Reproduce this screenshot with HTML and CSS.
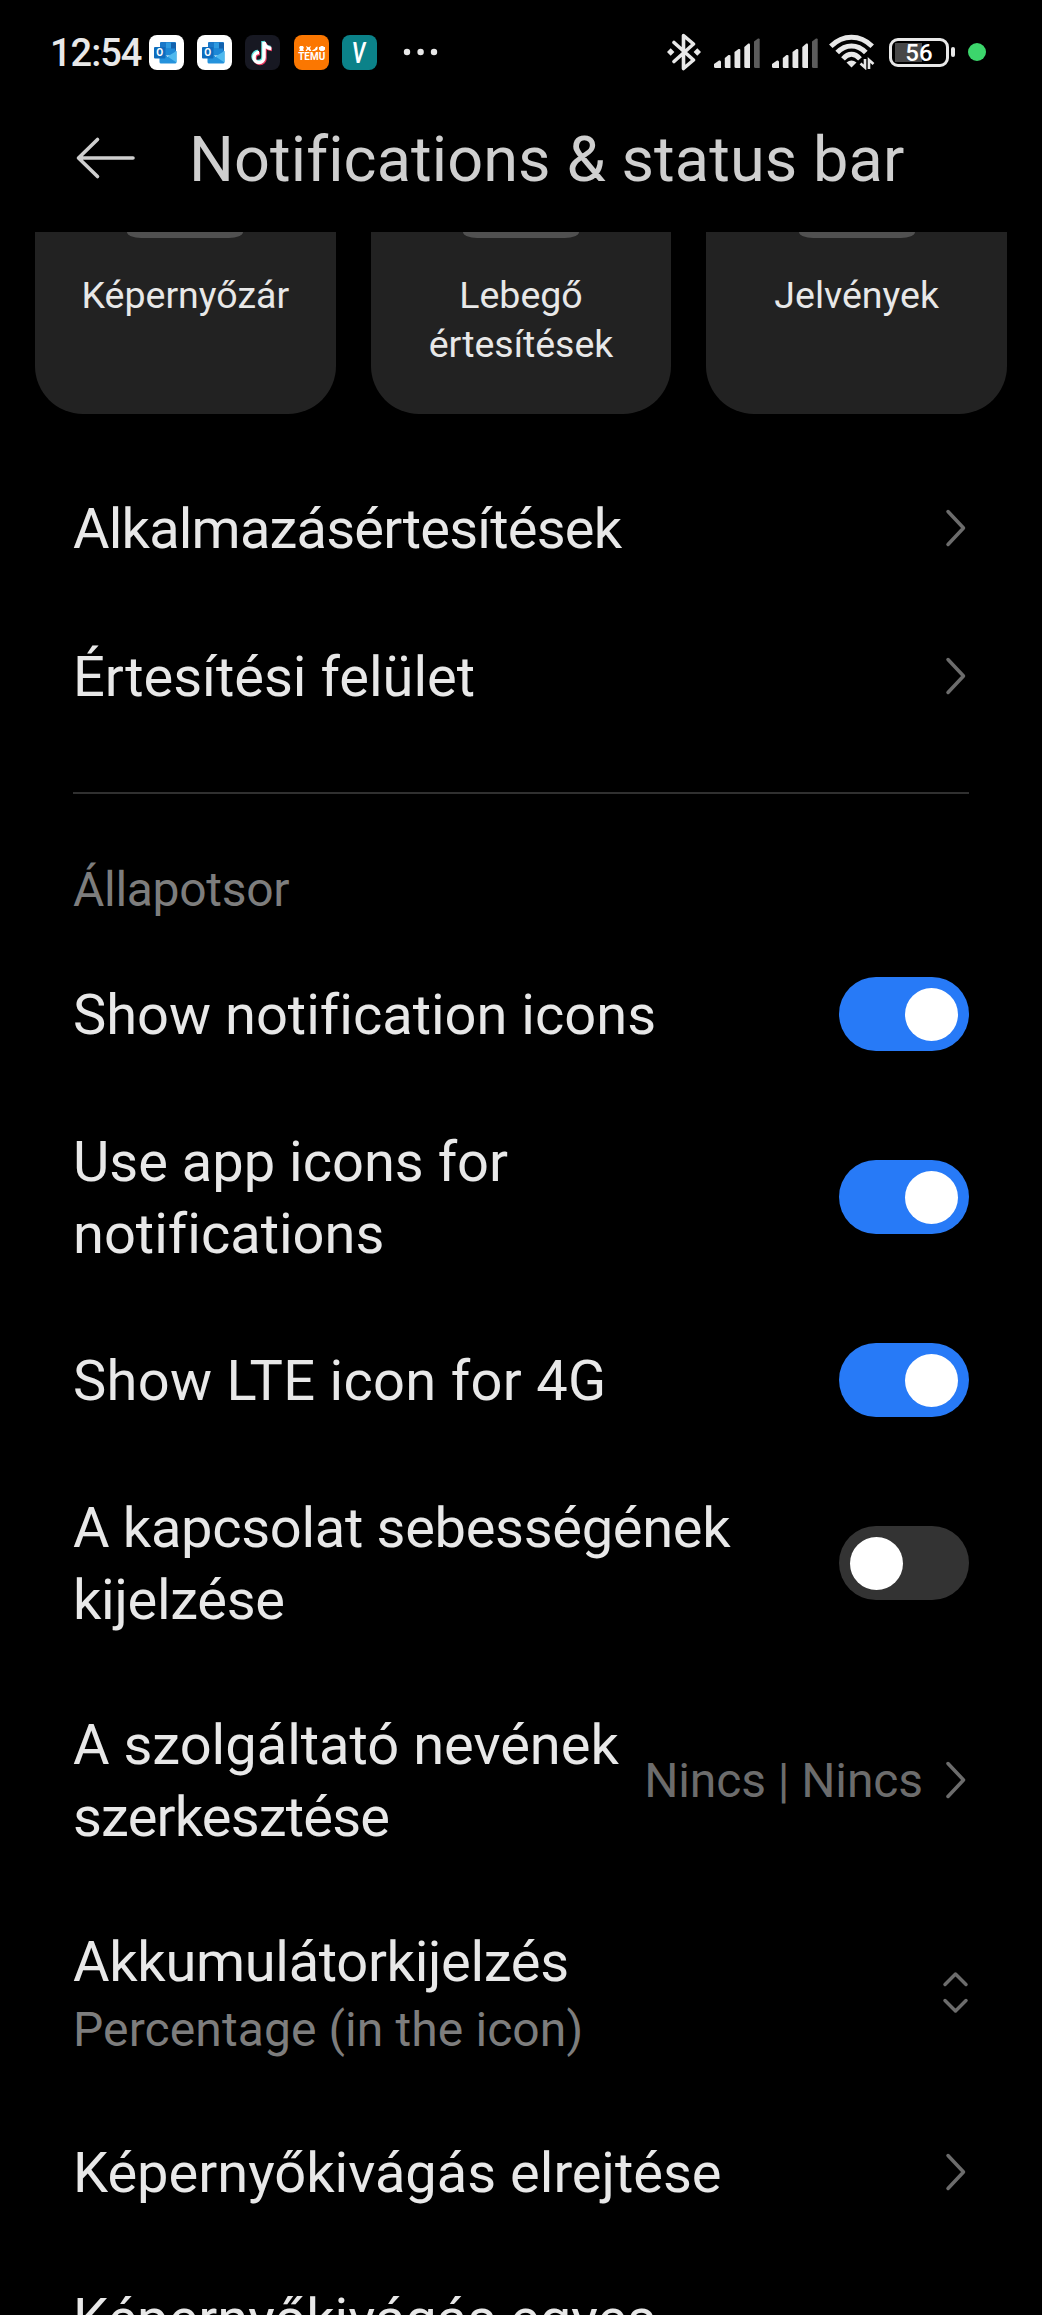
FILE: index.html
```html
<!DOCTYPE html>
<html lang="hu">
<head>
    <meta charset="UTF-8">
    <meta name="viewport" content="width=device-width, initial-scale=1.0">
    <title>Notifications &amp; status bar</title>
    <link rel="stylesheet" href="styles.css">
</head>
<body>

    <!-- Status bar -->
    <div class="status-bar">
        <div class="clock">12:54</div>
        <div class="app-icons">
            <svg width="35" height="35" viewBox="0 0 35 35">
                <rect width="35" height="35" rx="8" fill="#fff"/>
                <rect x="11" y="7" width="16" height="10" rx="1" fill="#1a78c8"/>
                <rect x="17" y="7.500" width="5" height="6" fill="#2f9be0"/>
                <rect x="22" y="8" width="5" height="7" fill="#1261ad"/>
                <rect x="11" y="13.500" width="15" height="7" fill="#1d88d6"/>
                <path d="M10.500 15 L19 22 L27.500 16 V27 Q27.500 28.500 26 28.500 H12 Q10.500 28.500 10.500 27 Z" fill="#2492dc"/>
                <path d="M18.500 21.500 L27.500 16 V27.500 Z" fill="#4fb9ee"/>
                <rect x="5" y="12" width="11.500" height="11.500" rx="1" fill="#0f6cbd"/>
                <text x="10.700" y="21.200" text-anchor="middle" class="outlook-letter">O</text>
            </svg>
            <svg width="35" height="35" viewBox="0 0 35 35">
                <rect width="35" height="35" rx="8" fill="#fff"/>
                <rect x="11" y="7" width="16" height="10" rx="1" fill="#1a78c8"/>
                <rect x="17" y="7.500" width="5" height="6" fill="#2f9be0"/>
                <rect x="22" y="8" width="5" height="7" fill="#1261ad"/>
                <rect x="11" y="13.500" width="15" height="7" fill="#1d88d6"/>
                <path d="M10.500 15 L19 22 L27.500 16 V27 Q27.500 28.500 26 28.500 H12 Q10.500 28.500 10.500 27 Z" fill="#2492dc"/>
                <path d="M18.500 21.500 L27.500 16 V27.500 Z" fill="#4fb9ee"/>
                <rect x="5" y="12" width="11.500" height="11.500" rx="1" fill="#0f6cbd"/>
                <text x="10.700" y="21.200" text-anchor="middle" class="outlook-letter">O</text>
            </svg>
            <svg width="35" height="35" viewBox="0 0 35 35">
                <rect width="35" height="35" rx="8" fill="#171822"/>
                <g fill="none" stroke-width="3.500">
                    <path d="M18 6 V21.500 A5 5 0 1 1 13 16.500 M18 6 Q19 12 25.500 12.500" stroke="#5fe3e0"/>
                    <path d="M20 8 V23.500 A5 5 0 1 1 15 18.500 M20 8 Q21 14 27 14.500" stroke="#e8395f"/>
                    <path d="M19 7 V22.500 A5 5 0 1 1 14 17.500 M19 7 Q20 13 26.300 13.500" stroke="#fff"/>
                </g>
            </svg>
            <svg width="35" height="35" viewBox="0 0 35 35">
                <rect width="35" height="35" rx="8" fill="#fb7701"/>
                <g fill="#fff">
                    <path d="M6 11 h3 l1 2 -1 1 1 2 H5 l1 -2 -1 -1 Z"/>
                    <path d="M12 11 l2.500 1.200 2.500 -1.200 -1 2.500 1.500 2.500 h-2 l-1.500 -1.500 -1 1.500 h-1.500 l1.500 -2.500 Z"/>
                    <path d="M18 15.500 q3 -.5 4 -3.500 l1.500 -.5 v2.500 q-1 2 -5 2 Z"/>
                    <path d="M25 12 h1 l1 -1 h2 l1 1 h1 v2.500 l-1.500 1.500 h-3 l-1.500 -1.500 Z"/>
                </g>
                <text x="17.700" y="25" text-anchor="middle" textLength="27" lengthAdjust="spacingAndGlyphs" class="temu-word">TEMU</text>
            </svg>
            <svg width="35" height="35" viewBox="0 0 35 35">
                <rect width="35" height="35" rx="8" fill="#0b8289"/>
                <text x="16.800" y="27.500" text-anchor="middle" textLength="13" lengthAdjust="spacingAndGlyphs" class="vinted-letter">V</text>
            </svg>
        </div>
        <svg class="more" width="36" height="8" viewBox="0 0 36 8" fill="#e8e8e8">
            <circle cx="4" cy="4" r="3.200"/><circle cx="17.600" cy="4" r="3.200"/><circle cx="31" cy="4" r="3.200"/>
        </svg>

        <div class="system-icons">
            <svg width="34" height="38" viewBox="0 0 34 38">
                <path d="M7 9.500 L26.500 27 L16.500 35.500 V2.500 L26.500 11 L7 28.500" fill="none" stroke="#e8e8e8" stroke-width="3.600" stroke-linecap="round" stroke-linejoin="round"/>
                <path d="M0 19 L3.700 15.300 L7.400 19 L3.700 22.700 Z M26.600 19 L30.300 15.300 L34 19 L30.300 22.700 Z" fill="#e8e8e8"/>
            </svg>
            <svg class="signal" width="46" height="30" viewBox="0 0 46 30" fill="#e8e8e8">
                <path d="M0 26 L5 22.500 Q7 22 7 24 V30 H1.500 Q0 30 0 28.500 Z"/>
                <path d="M10.800 20 L14.500 17 Q16.500 16.500 16.500 18 V30 H12 Q10.800 30 10.800 28.500 Z"/>
                <path d="M20.500 14 L24.500 11 Q26.300 10.500 26.300 12 V30 H22 Q20.500 30 20.500 28.500 Z"/>
                <path d="M30.300 9 L34.300 5.500 Q36 5 36 6.500 V30 H31.800 Q30.300 30 30.300 28.500 Z"/>
                <path d="M40 3.500 L44 .5 Q45.700 0 45.700 1.500 V30 H41.500 Q40 30 40 28.500 Z" fill="#5c5c5c"/>
            </svg>
            <svg class="signal" width="46" height="30" viewBox="0 0 46 30" fill="#e8e8e8">
                <path d="M0 26 L5 22.500 Q7 22 7 24 V30 H1.500 Q0 30 0 28.500 Z"/>
                <path d="M10.800 20 L14.500 17 Q16.500 16.500 16.500 18 V30 H12 Q10.800 30 10.800 28.500 Z"/>
                <path d="M20.500 14 L24.500 11 Q26.300 10.500 26.300 12 V30 H22 Q20.500 30 20.500 28.500 Z"/>
                <path d="M30.300 9 L34.300 5.500 Q36 5 36 6.500 V30 H31.800 Q30.300 30 30.300 28.500 Z"/>
                <path d="M40 3.500 L44 .5 Q45.700 0 45.700 1.500 V30 H41.500 Q40 30 40 28.500 Z" fill="#5c5c5c"/>
            </svg>
            <svg class="wifi" width="46" height="36" viewBox="0 0 46 36">
                <g fill="none" stroke="#e8e8e8" stroke-width="5">
                    <path d="M1.800 12.200 Q11 3.200 22.500 3.200 Q34 3.200 43.200 12.200"/>
                    <path d="M8.200 18.600 Q14.500 12 22.500 12 Q30.500 12 36.800 18.600"/>
                    <path d="M14 24.800 Q18 20.300 22.500 20.300 Q27 20.300 31 24.800"/>
                </g>
                <path d="M17.500 28.500 Q22.500 24.500 27.500 28.500 L22.500 33.500 Z" fill="#e8e8e8"/>
                <path d="M31.500 29.500 L36 33.500 V25 M44.500 30 L40 26 V35" fill="none" stroke="#e8e8e8" stroke-width="2.600"/>
            </svg>
            <div class="battery">
                <div class="battery-body"><span>56</span></div>
                <div class="battery-tip"></div>
            </div>
            <div class="privacy-dot"></div>
        </div>
    </div>

    <!-- Header -->
    <header class="header">
        <svg width="60" height="44" viewBox="0 0 60 44" fill="none" stroke="#cfcfcf" stroke-width="3.600" stroke-linecap="round" stroke-linejoin="round">
            <path d="M58 22 H3.500 M22.500 3.500 L3.500 22 L22.500 40.500"/>
        </svg>
        <h1>Notifications &amp; status bar</h1>
    </header>

    <!-- Notification style cards, scrolled under the header -->
    <div class="cards">
        <div class="card"><div class="preview"></div>Képernyőzár</div>
        <div class="card"><div class="preview"></div>Lebegő<br>értesítések</div>
        <div class="card"><div class="preview"></div>Jelvények</div>
    </div>

    <main class="settings">
        <div class="row">
            <div class="label tight">Alkalmazásértesítések</div>
            <svg class="chevron" viewBox="0 0 24 40"><path d="M3 3.500 L18.500 20 L3 36.500"/></svg>
        </div>
        <div class="row">
            <div class="label">Értesítési felület</div>
            <svg class="chevron" viewBox="0 0 24 40"><path d="M3 3.500 L18.500 20 L3 36.500"/></svg>
        </div>

        <hr>
        <h2>Állapotsor</h2>

        <div class="row">
            <div class="label">Show notification icons</div>
            <div class="toggle on"></div>
        </div>
        <div class="row two-line">
            <div class="label">Use app icons for<br>notifications</div>
            <div class="toggle on"></div>
        </div>
        <div class="row">
            <div class="label wide">Show LTE icon for 4G</div>
            <div class="toggle on"></div>
        </div>
        <div class="row two-line">
            <div class="label snug">A kapcsolat sebességének<br>kijelzése</div>
            <div class="toggle"></div>
        </div>
        <div class="row two-line carrier">
            <div class="label">A szolgáltató nevének<br><span class="tight">szerkesztése</span></div>
            <div class="value">Nincs | Nincs</div>
            <svg class="chevron" viewBox="0 0 24 40"><path d="M3 3.500 L18.500 20 L3 36.500"/></svg>
        </div>
        <div class="row with-summary">
            <div class="label snug">Akkumulátorkijelzés
                <div class="summary">Percentage (in the icon)</div>
            </div>
            <svg class="updown" width="28" height="44" viewBox="0 0 28 44">
                <path d="M4 13.500 L14.500 3 L25 13.500 M4 29.500 L14.500 40 L25 29.500"/>
            </svg>
        </div>
        <div class="row">
            <div class="label">Képernyőkivágás elrejtése</div>
            <svg class="chevron" viewBox="0 0 24 40"><path d="M3 3.500 L18.500 20 L3 36.500"/></svg>
        </div>
        <div class="row last">
            <div class="label">Képernyőkivágás egyes</div>
        </div>
    </main>

</body>
</html>
```
FILE: styles.css
```css
* {
    box-sizing: border-box;
}

body {
    margin: 0;
    width: 1042px;
    height: 2315px;
    overflow: hidden;
    background: #000;
    color: #e8e8e8;
    font-family: Roboto, "Noto Sans", sans-serif;
    font-variant-ligatures: none;
}

svg {
    display: block;
    flex-shrink: 0;
}

/* Status bar */
.status-bar {
    display: flex;
    align-items: center;
    height: 104px;
    padding: 0 56px 0 50px;
}

.clock {
    width: 99px;
    padding-top: 2px;
    font-size: 38px;
    font-weight: 500;
    letter-spacing: -1px;
    line-height: 40px;
}

.app-icons {
    display: flex;
    gap: 13.2px;
}

.outlook-letter {
    font-size: 10px;
    font-weight: 700;
    fill: #fff;
}

.temu-word {
    font-size: 10.5px;
    font-weight: 700;
    fill: #fff;
}

.vinted-letter {
    font-family: Lato, sans-serif;
    font-size: 28px;
    font-weight: 900;
    font-style: italic;
    fill: #fff;
}

.more {
    margin-left: 26px;
}

.system-icons {
    display: flex;
    align-items: center;
    margin-left: auto;
}

.signal {
    margin: 2px 0 0 13px;
}

.signal + .signal {
    margin-left: 12px;
}

.wifi {
    margin-left: 11px;
}

.battery {
    display: flex;
    align-items: center;
    gap: 2px;
    margin: 0 13px 0 14px;
}

.battery-body {
    width: 60px;
    height: 29px;
    padding: 2px;
    border: 3px solid #e8e8e8;
    border-radius: 9px;
    background: linear-gradient(to right, #484848 27px, transparent 27px) 3px 2px / 46px 19px no-repeat;
    font-size: 24px;
    font-weight: 500;
    line-height: 20px;
    text-align: center;
    color: #fff;
}

.battery-tip {
    width: 4px;
    height: 10px;
    border-radius: 2px;
    background: #e8e8e8;
}

.privacy-dot {
    width: 18px;
    height: 18px;
    border-radius: 50%;
    background: #3cd66c;
}

/* Header */
.header {
    display: flex;
    align-items: center;
    height: 128px;
    padding: 0 0 20px 75px;
}

.header h1 {
    margin: 0 0 0 54px;
    padding-top: 4px;
    font-size: 63px;
    font-weight: 400;
    letter-spacing: 0.1px;
    line-height: 80px;
    color: #cfcfcf;
}

/* Cards */
.cards {
    display: grid;
    grid-template-columns: repeat(3, 1fr);
    gap: 35px;
    padding: 0 35px;
}

.card {
    height: 182px;
    border-radius: 0 0 48px 48px;
    background: #222;
    font-size: 37.5px;
    line-height: 49px;
    text-align: center;
}

.preview {
    width: 116px;
    height: 6px;
    margin: 0 auto 33px;
    border-radius: 0 0 14px 14px / 0 0 6px 6px;
    background: #505050;
}

/* Settings list */
.settings {
    padding: 40px 73px 0;
}

.settings hr {
    height: 2px;
    margin: 42px 0 0;
    border: none;
    background: #303030;
}

.settings h2 {
    margin: 64px 0 18px;
    font-size: 48px;
    font-weight: 400;
    letter-spacing: -0.3px;
    line-height: 64px;
    color: #7d7d7d;
}

.row {
    display: flex;
    align-items: center;
    height: 148px;
}

.row.two-line {
    height: 218px;
}

.row.carrier {
    height: 216px;
}

.row.with-summary {
    height: 210px;
}

/* Runs off the bottom of the screen */
.row.last {
    align-items: flex-start;
    height: 69px;
    padding-top: 35px;
    overflow: hidden;
}

.label {
    flex: 1;
    padding-top: 2px;
    font-size: 56px;
    line-height: 72px;
    white-space: nowrap;
}

.tight {
    letter-spacing: -0.8px;
}

.snug {
    letter-spacing: -0.3px;
}

.wide {
    letter-spacing: 0.3px;
}

.summary {
    font-size: 48px;
    letter-spacing: 0.1px;
    line-height: 64px;
    color: #7d7d7d;
}

.value {
    margin-right: 22px;
    font-size: 48px;
    letter-spacing: -0.1px;
    color: #6c6c6c;
}

.chevron {
    width: 24px;
    height: 40px;
}

.chevron,
.updown {
    fill: none;
    stroke: #6c6c6c;
    stroke-width: 3.5px;
    stroke-linecap: round;
    stroke-linejoin: round;
}

.toggle {
    width: 130px;
    height: 74px;
    padding: 10.5px 11px;
    border-radius: 37px;
    background: #333;
}

.toggle::before {
    content: "";
    display: block;
    width: 53px;
    height: 53px;
    border-radius: 50%;
    background: #fff;
}

.toggle.on {
    background: #277af7;
}

.toggle.on::before {
    margin-left: auto;
}
```
